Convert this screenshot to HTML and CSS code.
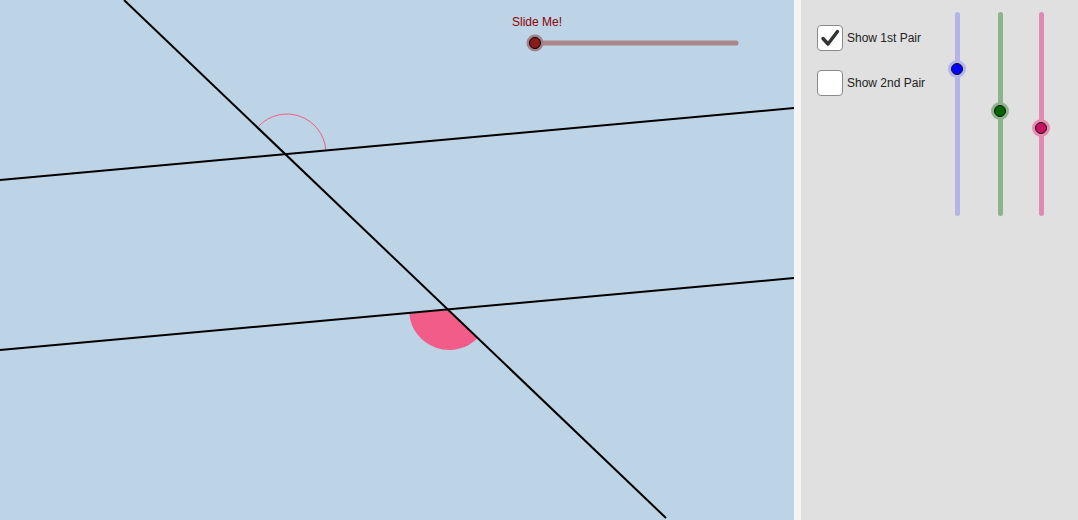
FILE: index.html
```html
<!DOCTYPE html>
<html>
<head>
<meta charset="utf-8">
<link rel="stylesheet" href="styles.css">
</head>
<body>
<div class="app">
  <div class="canvas">
    <svg class="drawing" width="794" height="520" viewBox="0 0 794 520">
      <path d="M449 310 L478.2 337.4 A40 40 0 0 1 409.2 313.5 Z" fill="#f25c88"/>
      <path d="M258.6 126.3 A39 39 0 0 1 325.8 149.6" fill="none" stroke="#f25c88" stroke-width="1"/>
      <line x1="124" y1="0" x2="666" y2="518" stroke="#000" stroke-width="2"/>
      <line x1="0" y1="180" x2="794" y2="108" stroke="#000" stroke-width="2"/>
      <line x1="0" y1="350" x2="794" y2="278" stroke="#000" stroke-width="2"/>
      <text x="512" y="26" class="slide-label">Slide Me!</text>
      <line x1="535" y1="43" x2="736" y2="43" stroke="#a8868b" stroke-width="5" stroke-linecap="round"/>
      <circle cx="535" cy="43" r="8.5" fill="#a37f88"/>
      <circle cx="535" cy="43" r="5.5" fill="#8b1a1a" stroke="#000" stroke-width="1"/>
    </svg>
  </div>
  <div class="divider"></div>
  <div class="panel">
    <div class="checks">
      <label class="check">
        <span class="box">
          <svg width="22" height="22" viewBox="0 0 22 22"><path d="M4 11.5 L9 17 L18.5 4.5" fill="none" stroke="#333" stroke-width="3.4" stroke-linecap="round" stroke-linejoin="round"/></svg>
        </span>
        <span class="text">Show 1st Pair</span>
      </label>
      <label class="check">
        <span class="box"></span>
        <span class="text">Show 2nd Pair</span>
      </label>
    </div>
    <div class="vsliders">
      <div class="track t-blue"><span class="knob k-blue" style="top:51px"></span></div>
      <div class="track t-green"><span class="knob k-green" style="top:93px"></span></div>
      <div class="track t-pink"><span class="knob k-pink" style="top:110px"></span></div>
    </div>
  </div>
</div>
</body>
</html>
```
FILE: styles.css
```css
html, body {
  margin: 0;
  padding: 0;
  background: #e0e0e0;
}
.app {
  display: flex;
  width: 1078px;
  height: 520px;
  overflow: hidden;
}
.canvas {
  width: 794px;
  height: 520px;
  background: #bdd4e6;
  flex: none;
}
.drawing {
  display: block;
}
.slide-label {
  font-family: "Liberation Sans", Arial, sans-serif;
  font-size: 12px;
  fill: #8b0000;
}
.divider {
  width: 7px;
  flex: none;
  background: #f4f4f4;
}
.panel {
  flex: 1;
  display: flex;
  background: #e0e0e0;
}
.checks {
  display: flex;
  flex-direction: column;
  gap: 19px;
  padding: 25px 0 0 16px;
  width: 138px;
}
.check {
  display: flex;
  align-items: center;
  gap: 4px;
}
.box {
  width: 24px;
  height: 24px;
  border: 1.5px solid #8a8a8a;
  border-radius: 4px;
  background: #fff;
  display: flex;
  align-items: center;
  justify-content: center;
}
.text {
  font-family: "Liberation Sans", Arial, sans-serif;
  font-size: 12px;
  color: #222;
}
.vsliders {
  display: flex;
  padding-top: 12px;
}
.track {
  position: relative;
  width: 5px;
  height: 204px;
  border-radius: 3px;
}
.track + .track {
  margin-left: 38px;
}
.track.t-pink {
  margin-left: 36px;
}
.t-blue { background: #b3b5e6; }
.t-green { background: #8db38d; }
.t-pink { background: #df89b3; }
.knob {
  position: absolute;
  left: -4.5px;
  width: 12px;
  height: 12px;
  border-radius: 50%;
  border: 1px solid #111;
  box-sizing: border-box;
}
.k-blue { background: #0000ff; box-shadow: 0 0 0 3px #b3b5ee; }
.k-green { background: #006400; box-shadow: 0 0 0 3px #8db38d; }
.k-pink { background: #c8145f; box-shadow: 0 0 0 3px #eb8ab3; }
```
